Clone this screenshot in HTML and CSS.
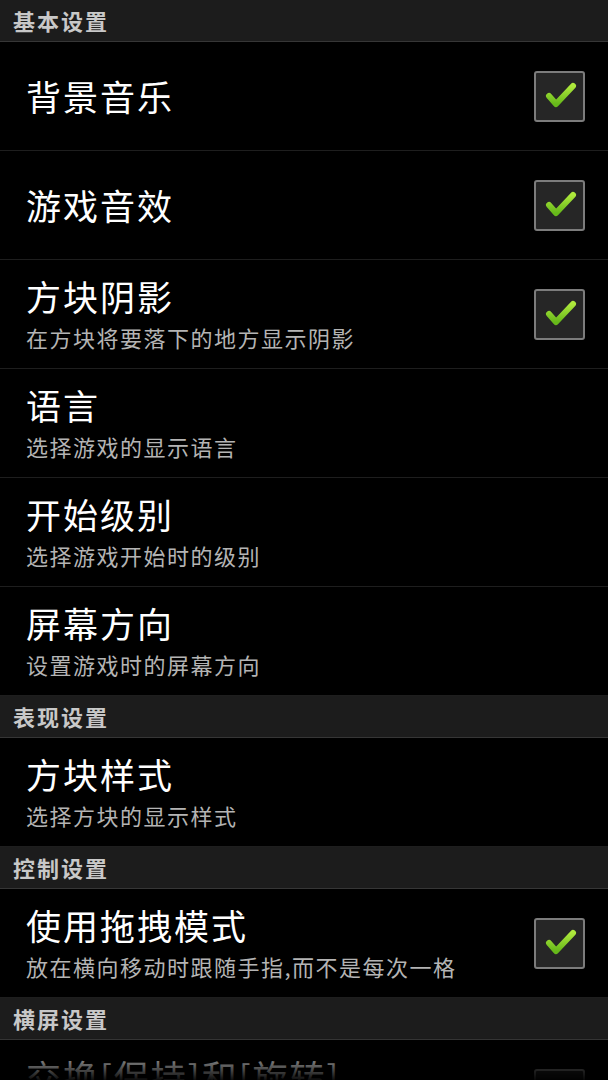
FILE: index.html
```html
<!DOCTYPE html>
<html lang="zh-CN">
<head>
<meta charset="utf-8">
<title>设置</title>
<link rel="stylesheet" href="styles.css">
</head>
<body>
<div class="list">
  <div class="section">基本设置</div>
  <div class="row">
    <div class="text"><div class="title">背景音乐</div></div>
    <div class="cb checked"><svg viewBox="0 0 47 47"><defs><linearGradient id="g" x1="0" y1="0" x2="0" y2="1"><stop offset="0" stop-color="#aee83c"/><stop offset="1" stop-color="#66b81a"/></linearGradient></defs><polyline points="13,23 20,31 37,13" fill="none" stroke="url(#g)" stroke-width="6" stroke-linecap="round" stroke-linejoin="round"/></svg></div>
  </div>
  <div class="row">
    <div class="text"><div class="title">游戏音效</div></div>
    <div class="cb checked"><svg viewBox="0 0 47 47"><polyline points="13,23 20,31 37,13" fill="none" stroke="url(#g)" stroke-width="6" stroke-linecap="round" stroke-linejoin="round"/></svg></div>
  </div>
  <div class="row">
    <div class="text"><div class="title">方块阴影</div><div class="sub">在方块将要落下的地方显示阴影</div></div>
    <div class="cb checked"><svg viewBox="0 0 47 47"><polyline points="13,23 20,31 37,13" fill="none" stroke="url(#g)" stroke-width="6" stroke-linecap="round" stroke-linejoin="round"/></svg></div>
  </div>
  <div class="row">
    <div class="text"><div class="title">语言</div><div class="sub">选择游戏的显示语言</div></div>
  </div>
  <div class="row">
    <div class="text"><div class="title">开始级别</div><div class="sub">选择游戏开始时的级别</div></div>
  </div>
  <div class="row">
    <div class="text"><div class="title">屏幕方向</div><div class="sub">设置游戏时的屏幕方向</div></div>
  </div>
  <div class="section">表现设置</div>
  <div class="row">
    <div class="text"><div class="title">方块样式</div><div class="sub">选择方块的显示样式</div></div>
  </div>
  <div class="section">控制设置</div>
  <div class="row">
    <div class="text"><div class="title">使用拖拽模式</div><div class="sub">放在横向移动时跟随手指,而不是每次一格</div></div>
    <div class="cb checked"><svg viewBox="0 0 47 47"><polyline points="13,23 20,31 37,13" fill="none" stroke="url(#g)" stroke-width="6" stroke-linecap="round" stroke-linejoin="round"/></svg></div>
  </div>
  <div class="section">横屏设置</div>
  <div class="row">
    <div class="text"><div class="title">交换[保持]和[旋转]</div><div class="sub">&nbsp;</div></div>
    <div class="cb"></div>
  </div>
</div>
<div class="fade"></div>
</body>
</html>
```
FILE: styles.css
```css
html, body {
  margin: 0;
  padding: 0;
  background: #000;
  overflow: hidden;
  height: 1080px;
}
body {
  font-family: "Noto Sans CJK SC", "Noto Sans", sans-serif;
  color: #fff;
  width: 608px;
}
.list {
  display: flex;
  flex-direction: column;
}
.section {
  height: 41px;
  line-height: 41px;
  background: #1c1c1c;
  border-bottom: 1px solid #363636;
  color: #c8c8c8;
  font-size: 22px;
  font-weight: bold;
  letter-spacing: 2px;
  padding-left: 13px;
}
.row {
  height: 108px;
  border-bottom: 1px solid #1e1e1e;
  display: flex;
  align-items: center;
  padding: 0 23px 0 26px;
  box-sizing: content-box;
}
.text {
  flex: 1;
  display: flex;
  flex-direction: column;
}
.title {
  font-size: 35px;
  line-height: 46px;
  letter-spacing: 2px;
  color: #fff;
}
.sub {
  font-size: 22px;
  line-height: 36px;
  letter-spacing: 1.5px;
  color: #b4b4b4;
}
.cb {
  width: 47px;
  height: 47px;
  border: 2px solid #7c7c7c;
  border-radius: 3px;
  background: #262626;
  flex: none;
}
.cb svg {
  display: block;
  width: 47px;
  height: 47px;
}
.fade {
  position: fixed;
  left: 0;
  right: 0;
  bottom: 0;
  height: 42px;
  background: linear-gradient(to bottom, rgba(0,0,0,0), rgba(0,0,0,0.95));
  pointer-events: none;
}
```
